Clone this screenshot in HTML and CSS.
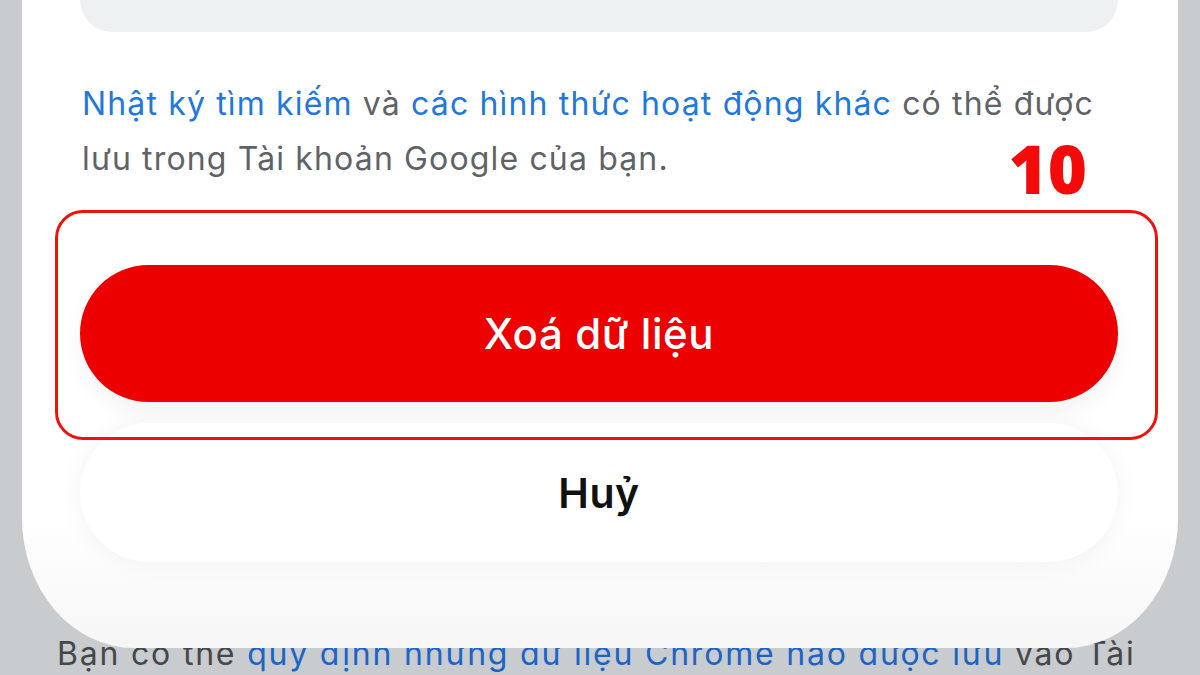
FILE: index.html
```html
<!DOCTYPE html>
<html>
  <head>
    <title>Xoá dữ liệu</title>
    <meta charset="UTF-8" />
    <link rel="stylesheet" href="styles.css">
  </head>
  <body>
    <div class="sheet">
      <div class="top-box"></div>

      <p class="note">
        <span class="link">Nhật ký tìm kiếm</span> và <span class="link">các hình thức hoạt động khác</span> có thể được<br>
        lưu trong Tài khoản Google của bạn.
      </p>

      <div class="actions">
        <button class="btn delete">Xoá dữ liệu</button>
        <button class="btn cancel">Huỷ</button>
      </div>

      <div class="step">10</div>
      <div class="highlight"></div>
    </div>

    <p class="behind">
      Bạn có thể <span class="link">quy định những dữ liệu Chrome nào được lưu</span> vào Tài
    </p>
  </body>
</html>
```

FILE: styles.css
```css
body {
  margin: 0;
  height: 675px;
  overflow: hidden;
  background: #c9cccf;
  font-family: Inter, "Noto Sans", sans-serif;
}

.sheet {
  position: relative;
  z-index: 1;
  height: 648px;
  margin: 0 22px;
  padding: 0 60px 0 58px;
  box-sizing: border-box;
  background: linear-gradient(#ffffff 80%, #f6f6f6);
  border-radius: 0 0 112px 112px / 0 0 130px 130px;
}

.top-box {
  height: 32px;
  background: #eef1f2;
  border-radius: 0 0 34px 34px;
}

.note {
  margin: 44px 0 0 2px;
  font-size: 32px;
  line-height: 55px;
  color: #5f6368;
  letter-spacing: 1.15px;
  white-space: nowrap;
}

.link {
  color: #1f78dc;
}

.actions {
  display: flex;
  flex-direction: column;
  gap: 21px;
  margin-top: 79px;
}

.btn {
  border: none;
  font-family: Inter, "Noto Sans", sans-serif;
  border-radius: 70px;
}

.delete {
  height: 137px;
  background: #ec0000;
  color: #ffffff;
  font-size: 42px;
  font-weight: 500;
  letter-spacing: 0.6px;
  box-shadow: 0 10px 22px rgba(0, 0, 0, 0.05);
}

.cancel {
  height: 139px;
  background: #ffffff;
  color: #111111;
  font-size: 41px;
  font-weight: 600;
  letter-spacing: 0.5px;
  box-shadow: 0 0 26px rgba(0, 0, 0, 0.05);
}

.step {
  position: absolute;
  top: 128px;
  right: 91px;
  color: #f50a0a;
  font-family: "Open Sans", sans-serif;
  font-weight: 800;
  font-size: 67px;
  line-height: 80px;
}

.highlight {
  position: absolute;
  top: 210px;
  left: 33px;
  width: 1103px;
  height: 230px;
  box-sizing: border-box;
  border: 3px solid #f01010;
  border-radius: 28px;
}

.behind {
  margin: -14px 0 0 57px;
  font-size: 32px;
  line-height: 40px;
  color: #454749;
  letter-spacing: 1.8px;
  white-space: nowrap;
}

.behind .link {
  color: #1c64c6;
}
```
